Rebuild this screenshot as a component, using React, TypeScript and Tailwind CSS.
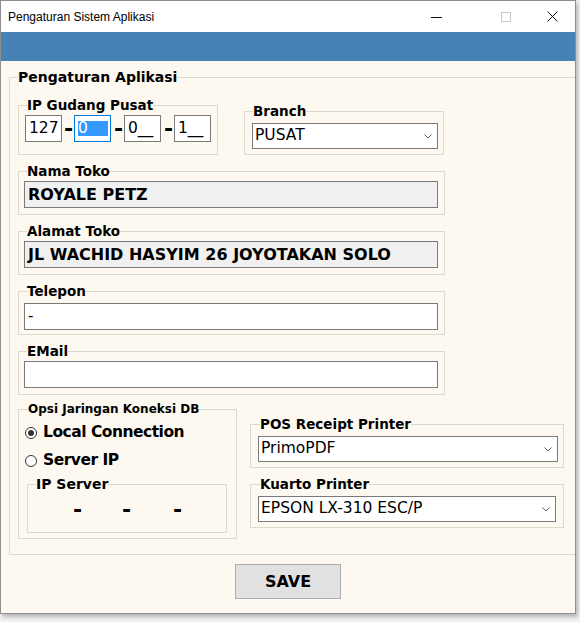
import React from "react";

const FONT = "font-['DejaVu_Sans',sans-serif]";

type GroupProps = {
	title: string;
	className?: string;
	legendClass?: string;
	children?: React.ReactNode;
};

// WinForms-like group box: fieldset with the caption cutting the border
const GroupBox: React.FC<GroupProps> = ({ title, className = "", legendClass = "", children }) => (
	<fieldset className={`border border-[#dcd9d0] min-w-0 ${className}`}>
		<legend className={`font-bold text-black whitespace-nowrap ${legendClass}`}>{title}</legend>
		{children}
	</fieldset>
);

const Chevron = () => (
	<svg width="8" height="5" viewBox="0 0 8 5" className="shrink-0">
		<path d="M0.5 0.5 L4 4 L7.5 0.5" stroke="#5f5f5f" strokeWidth="1" fill="none" />
	</svg>
);

const ComboBox: React.FC<{ value: string; className?: string }> = ({ value, className = "" }) => (
	<div
		className={`h-[26px] bg-white border border-[#7a7a7a] flex items-center justify-between pl-[2px] pr-[5px] text-[15.5px] leading-none text-black ${className}`}
	>
		<span>{value}</span>
		<Chevron />
	</div>
);

const TextBox: React.FC<{ value?: string; readOnly?: boolean; bold?: boolean }> = ({
	value = "",
	readOnly = false,
	bold = false,
}) => (
	<div
		className={`h-[27px] w-[414px] border border-[#7a7a7a] flex items-center pl-[3px] text-black ${
			readOnly ? "bg-[#f0f0f0]" : "bg-white"
		} ${bold ? "font-bold text-[16px]" : "text-[15px]"}`}
	>
		{value}
	</div>
);

const IpBox: React.FC<{ children: React.ReactNode; focused?: boolean }> = ({ children, focused }) => (
	<div
		className={`w-[37px] h-[27px] bg-white border flex items-center pl-[3px] text-[15.5px] leading-none text-black ${
			focused ? "border-[#0078d7]" : "border-[#7a7a7a]"
		}`}
	>
		{children}
	</div>
);

const Dash: React.FC<{ className?: string }> = ({ className = "" }) => (
	<span className={`font-bold text-[22px] leading-[20px] h-[20px] text-black ${className}`}>-</span>
);

const Radio: React.FC<{ checked?: boolean; label: string }> = ({ checked, label }) => (
	<div className="flex items-center h-[20px]">
		<span className="w-[12px] h-[12px] rounded-full border border-[#333] bg-white flex items-center justify-center">
			{checked && <span className="w-[6px] h-[6px] rounded-full bg-[#333]" />}
		</span>
		<span className="ml-[6px] font-bold text-[15.5px] tracking-[-0.5px] text-black">{label}</span>
	</div>
);

export default function App() {
	return (
		<div className={`w-[580px] h-[622px] bg-[#f3f3f3] overflow-hidden ${FONT}`}>
			<div className="w-[576px] h-[614px] bg-[#fdf9f0] border border-[#8f8f8f] shadow-[2px_3px_4px_rgba(0,0,0,0.25)] flex flex-col overflow-hidden">
				{/* title bar */}
				<div className="h-[31px] bg-white flex items-center shrink-0">
					<span className="pl-[7px] text-[12px] text-black font-['Liberation_Sans',sans-serif]">
						Pengaturan Sistem Aplikasi
					</span>
					<div className="ml-auto flex h-full">
						<div className="w-[46px] h-full flex items-center justify-center">
							<svg width="11" height="10" viewBox="0 0 11 10">
								<path d="M0 5.5 H11" stroke="#111" strokeWidth="1" />
							</svg>
						</div>
						<div className="w-[42px] h-full" />
						<div className="w-[28px] h-full flex items-center justify-start">
							<svg width="10" height="10" viewBox="0 0 10 10">
								<rect x="0.5" y="0.5" width="9" height="9" stroke="#c8c8c8" fill="none" />
							</svg>
						</div>
						<div className="w-[46px] h-full flex items-center justify-center">
							<svg width="11" height="11" viewBox="0 0 11 11">
								<path d="M0.5 0.5 L10.5 10.5 M10.5 0.5 L0.5 10.5" stroke="#111" strokeWidth="1" />
							</svg>
						</div>
					</div>
				</div>
				<div className="h-[29px] bg-[#4682b4] shrink-0" />

				{/* body */}
				<div className="flex-1 pt-[8px] flex flex-col">
					<GroupBox
						title="Pengaturan Aplikasi"
						className="ml-[8px] w-[600px] pl-[8px] pt-[13px] pb-[15px]"
						legendClass="text-[14px] leading-[16px]"
					>
						<div className="flex items-end">
							<GroupBox
								title="IP Gudang Pusat"
								className="w-[200px] pl-[6px] pt-[3px] pb-[12px]"
								legendClass="ml-[2px] text-[13.5px] leading-[14px]"
							>
								<div className="flex items-center">
									<IpBox>127</IpBox>
									<Dash className="w-[12px] pl-[2px]" />
									<IpBox focused>
										<span className="bg-[#3399ff] text-white leading-[15px] w-[30px]">0__</span>
									</IpBox>
									<Dash className="w-[13px] pl-[3px]" />
									<IpBox>0__</IpBox>
									<Dash className="w-[13px] pl-[3px]" />
									<IpBox>1__</IpBox>
								</div>
							</GroupBox>
							<GroupBox
								title="Branch"
								className="ml-[26px] w-[200px] pl-[7px] pr-[5px] pt-[5px] pb-[5px]"
								legendClass="ml-[1px] text-[13.5px] leading-[14px]"
							>
								<ComboBox value="PUSAT" className="w-[186px]" />
							</GroupBox>
						</div>

						<GroupBox
							title="Nama Toko"
							className="mt-[9px] w-[427px] pl-[5px] pt-[3px] pb-[6px]"
							legendClass="ml-[3px] text-[13.5px] leading-[14px]"
						>
							<TextBox value="ROYALE PETZ" readOnly bold />
						</GroupBox>
						<GroupBox
							title="Alamat Toko"
							className="mt-[9px] w-[427px] pl-[5px] pt-[3px] pb-[6px]"
							legendClass="ml-[3px] text-[13.5px] leading-[14px]"
						>
							<TextBox value="JL WACHID HASYIM 26 JOYOTAKAN SOLO" readOnly bold />
						</GroupBox>
						<GroupBox
							title="Telepon"
							className="mt-[9px] w-[427px] pl-[5px] pt-[5px] pb-[4px]"
							legendClass="ml-[3px] text-[13.5px] leading-[14px]"
						>
							<TextBox value="-" />
						</GroupBox>
						<GroupBox
							title="EMail"
							className="mt-[9px] w-[427px] pl-[5px] pt-[3px] pb-[6px]"
							legendClass="ml-[3px] text-[13.5px] leading-[14px]"
						>
							<TextBox />
						</GroupBox>

						<div className="flex items-start mt-[8px]">
							<GroupBox
								title="Opsi Jaringan Koneksi DB"
								className="w-[219px] pl-[6px] pt-[8px] pb-[5px]"
								legendClass="ml-[3px] text-[12px] leading-[12px]"
							>
								<div className="flex flex-col gap-[8px]">
									<Radio checked label="Local Connection" />
									<Radio label="Server IP" />
								</div>
								<GroupBox
									title="IP Server"
									className="mt-[6px] ml-[2px] w-[200px] pl-[8px] pt-[9px] pb-[12px]"
									legendClass="text-[14px] leading-[14px]"
								>
									<div className="flex h-[20px]">
										<Dash className="ml-[37px] w-[49px]" />
										<Dash className="w-[51px]" />
										<Dash className="w-[10px]" />
									</div>
								</GroupBox>
							</GroupBox>

							<div className="ml-[13px] mt-[14px] flex flex-col">
								<GroupBox
									title="POS Receipt Printer"
									className="w-[314px] pl-[7px] pt-[5px] pb-[5px]"
									legendClass="ml-[2px] text-[13.5px] leading-[14px]"
								>
									<ComboBox value="PrimoPDF" className="w-[300px]" />
								</GroupBox>
								<GroupBox
									title="Kuarto Printer"
									className="mt-[9px] w-[314px] pl-[7px] pt-[5px] pb-[5px]"
									legendClass="ml-[2px] text-[13.5px] leading-[14px]"
								>
									<ComboBox value="EPSON LX-310 ESC/P" className="w-[298px]" />
								</GroupBox>
							</div>
						</div>
					</GroupBox>

					<div className="flex justify-center mt-[9px]">
						<button className="w-[106px] h-[35px] bg-[#e1e1e1] border border-[#adadad] font-bold text-[16px] text-black">
							SAVE
						</button>
					</div>
				</div>
			</div>
		</div>
	);
}
